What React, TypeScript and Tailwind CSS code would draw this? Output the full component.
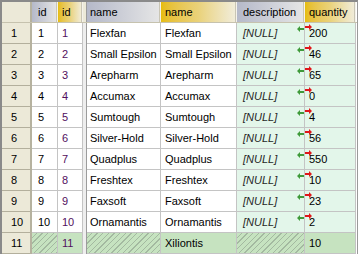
import type { ReactNode } from "react";

type Row = { n: number; id: number | null; name: string | null; idNew: number; nameNew: string; qty: number; isNew?: boolean };

const ROWS: Row[] = [
  { n: 1, id: 1, name: "Flexfan", idNew: 1, nameNew: "Flexfan", qty: 200 },
  { n: 2, id: 2, name: "Small Epsilon", idNew: 2, nameNew: "Small Epsilon", qty: 46 },
  { n: 3, id: 3, name: "Arepharm", idNew: 3, nameNew: "Arepharm", qty: 65 },
  { n: 4, id: 4, name: "Accumax", idNew: 4, nameNew: "Accumax", qty: 0 },
  { n: 5, id: 5, name: "Sumtough", idNew: 5, nameNew: "Sumtough", qty: 4 },
  { n: 6, id: 6, name: "Silver-Hold", idNew: 6, nameNew: "Silver-Hold", qty: 56 },
  { n: 7, id: 7, name: "Quadplus", idNew: 7, nameNew: "Quadplus", qty: 550 },
  { n: 8, id: 8, name: "Freshtex", idNew: 8, nameNew: "Freshtex", qty: 10 },
  { n: 9, id: 9, name: "Faxsoft", idNew: 9, nameNew: "Faxsoft", qty: 23 },
  { n: 10, id: 10, name: "Ornamantis", idNew: 10, nameNew: "Ornamantis", qty: 2 },
  { n: 11, id: null, name: null, idNew: 11, nameNew: "Xiliontis", qty: 10, isNew: true },
];

const GRAY_HEAD = "bg-linear-to-r from-[#b5b9c9] to-[#e6e6e6]";
const GOLD_HEAD = "bg-linear-to-r from-[#e6bc08] via-[#ead27a] to-[#f1eddc]";
const HATCH =
  "bg-[repeating-linear-gradient(135deg,transparent_0_3px,#a3b9a0_3px_4px)]";

function HeadCell({ w, pad, gold, children }: { w: string; pad: string; gold?: boolean; children: ReactNode }) {
  return (
    <div
      className={`${w} ${pad} ${gold ? GOLD_HEAD : GRAY_HEAD} flex h-full items-center border-r border-r-[#f4f2ea] shadow-[inset_-1px_0_0_#c9c5b4]`}
    >
      {children}
    </div>
  );
}

function Cell({ w, pad, bg, children, className = "" }: { w: string; pad: string; bg: string; children?: ReactNode; className?: string }) {
  return (
    <div className={`${w} ${pad} ${bg} relative flex h-full items-center border-r border-b border-[#c4c4c4] ${className}`}>
      {children}
    </div>
  );
}

// change markers sitting on the description/quantity boundary
function Arrows() {
  return (
    <>
      <svg className="absolute left-[-8px] top-[3px]" width="7" height="6" viewBox="0 0 7 6">
        <polygon points="0,3 3,0 3,2 7,2 7,4 3,4 3,6" fill="#3f9a3a" />
      </svg>
      <svg className="absolute left-0 top-[1px]" width="7" height="6" viewBox="0 0 7 6">
        <polygon points="7,3 4,0 4,2 0,2 0,4 4,4 4,6" fill="#e0161a" />
      </svg>
    </>
  );
}

function Separator({ head }: { head?: boolean }) {
  return <div className={`h-full w-[4px] border-r border-[#9c9c9c] ${head ? "bg-[#ece9d8]" : "bg-[#eeeeee]"}`} />;
}

export default function App() {
  return (
    <div className="h-[258px] w-[360px] overflow-hidden bg-white font-['Liberation_Sans',Arial,sans-serif] text-[11px] text-black">
      <div className="w-[358px] border-t-2 border-l-2 border-t-[#8a8a8a] border-l-[#8a8a8a] border-r border-r-[#9a9a9a]">
        <div className="flex h-[21px] border-b border-[#c6c2ae]">
          <div className="h-full w-[28px] bg-[#ece9d8]" />
          <div className="h-full w-[2px] bg-[#b6b29f]" />
          <HeadCell w="w-[26px]" pad="pl-[6px]">id</HeadCell>
          <HeadCell w="w-[25px]" pad="pl-[4px]" gold>id</HeadCell>
          <Separator head />
          <HeadCell w="w-[74px]" pad="pl-[3px]">name</HeadCell>
          <HeadCell w="w-[76px]" pad="pl-[4px]" gold>name</HeadCell>
          <HeadCell w="w-[68px]" pad="pl-[6px]">description</HeadCell>
          <HeadCell w="w-[51px]" pad="pl-[4px]" gold>quantity</HeadCell>
        </div>

        {ROWS.map((r) => {
          const plain = r.isNew ? "bg-[#c6e3c0]" : "bg-white";
          const mint = r.isNew ? "bg-[#c6e3c0]" : "bg-[#e3f6ea]";
          return (
            <div key={r.n} className="flex h-[21px]">
              <div className="flex h-full w-[28px] items-center border-b border-[#b3af9c] bg-[#ece9d8] pl-[9px]">{r.n}</div>
              <div className="h-full w-[2px] bg-[#b6b29f]" />
              <Cell w="w-[26px]" pad="pl-[6px]" bg={plain} className={r.isNew ? HATCH : ""}>
                {r.id}
              </Cell>
              <Cell w="w-[25px]" pad="pl-[4px]" bg={plain} className="text-[#520f5e]">
                {r.idNew}
              </Cell>
              <Separator />
              <Cell w="w-[74px]" pad="pl-[3px]" bg={plain} className={r.isNew ? HATCH : ""}>
                {r.name}
              </Cell>
              <Cell w="w-[76px]" pad="pl-[4px]" bg={plain}>
                {r.nameNew}
              </Cell>
              <Cell w="w-[68px]" pad="pl-[6px]" bg={mint} className={r.isNew ? HATCH : "italic text-[#262626]"}>
                {r.isNew ? null : "[NULL]"}
              </Cell>
              <Cell w="w-[51px]" pad="pl-[4px]" bg={mint}>
                {!r.isNew && <Arrows />}
                <span className="pt-[1px]">{r.qty}</span>
              </Cell>
            </div>
          );
        })}
      </div>
    </div>
  );
}
